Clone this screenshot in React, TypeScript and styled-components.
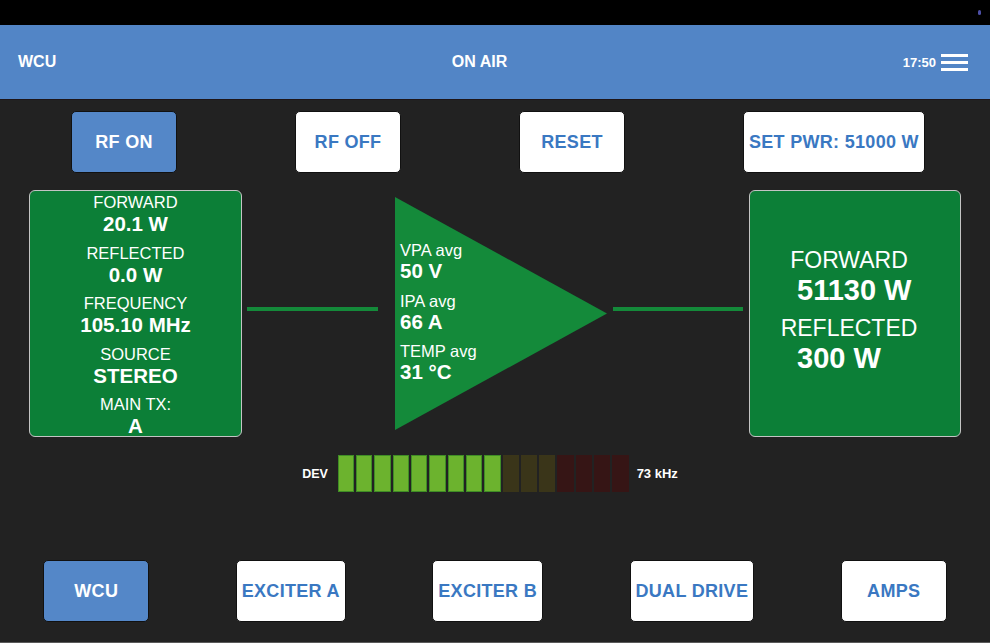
import React from "react";
import styled, { createGlobalStyle } from "styled-components";

const Global = createGlobalStyle`
  html, body { margin: 0; padding: 0; background: #222222; }
  body { font-family: "Liberation Sans", Arial, Helvetica, sans-serif; }
  * { box-sizing: border-box; }
`;

const Page = styled.div`
  width: 990px;
  height: 643px;
  display: flex;
  flex-direction: column;
  background: #222222;
  border-bottom: 1px solid #5a5a5a;
  overflow: hidden;
`;

const StatusBar = styled.div`
  height: 25px;
  background: #000;
  display: flex;
  justify-content: flex-end;
  align-items: center;
  padding-right: 9px;
`;

const StatusDot = styled.span`
  width: 3px;
  height: 5px;
  border-radius: 2px;
  background: #4d4fa6;
`;

const Header = styled.header`
  height: 75px;
  background: #5285c6;
  border-bottom: 1px solid #1e1517;
  display: flex;
  justify-content: space-between;
  align-items: center;
  padding: 0 22px 0 18px;
  color: #fff;
`;

const HeaderTitle = styled.div`
  font-weight: bold;
  font-size: 16px;
`;

const HeaderRight = styled.div`
  display: flex;
  align-items: center;
  gap: 5px;
`;

const Clock = styled.span`
  font-weight: bold;
  font-size: 13px;
`;

const Hamburger = styled.div`
  width: 27px;
  display: flex;
  flex-direction: column;
  gap: 4px;
  span {
    display: block;
    height: 3px;
    background: #fff;
  }
`;

const TopRow = styled.div`
  margin-top: 11px;
  padding-left: 71px;
  display: grid;
  grid-template-columns: repeat(4, 224px);
  justify-items: start;
`;

const Button = styled.button<{ $active?: boolean }>`
  height: 62px;
  min-width: 106px;
  padding: 0 5px;
  border: 1px solid #111;
  border-radius: 5px;
  background: ${(p) => (p.$active ? "#5487c8" : "#ffffff")};
  color: ${(p) => (p.$active ? "#ffffff" : "#3a78c2")};
  font-family: "Liberation Sans", Arial, Helvetica, sans-serif;
  font-weight: bold;
  font-size: 18px;
  letter-spacing: 0.3px;
  white-space: nowrap;
  cursor: pointer;
`;

const Middle = styled.div`
  margin-top: 17px;
  padding-left: 29px;
  height: 247px;
  display: flex;
  align-items: center;
`;

const Panel = styled.div`
  height: 247px;
  background: #0c7f37;
  border: 1px solid #c4c4c4;
  border-radius: 6px;
  color: #fff;
  display: flex;
  flex-direction: column;
`;

const LeftPanel = styled(Panel)`
  width: 213px;
  align-items: center;
  padding-top: 1px;
  gap: 7.5px;
`;

const InfoGroup = styled.div`
  display: flex;
  flex-direction: column;
  align-items: center;
`;

const SmallLabel = styled.div`
  font-size: 16.5px;
  line-height: 20px;
`;

const SmallValue = styled.div<{ $lh?: number }>`
  font-size: 20.5px;
  font-weight: bold;
  line-height: ${(p) => p.$lh ?? 23}px;
`;

const Wire = styled.div<{ $width: number; $gap: number }>`
  width: ${(p) => p.$width}px;
  margin-left: ${(p) => p.$gap}px;
  height: 4px;
  margin-bottom: 9px;
  background: #148a3a;
`;

const Amp = styled.div`
  position: relative;
  margin-left: 17px;
  width: 212px;
  height: 233px;
  color: #fff;
  padding: 43px 0 0 5px;
  display: flex;
  flex-direction: column;
  gap: 9.5px;
`;

const AmpShape = styled.svg`
  position: absolute;
  left: 0;
  top: 0;
  z-index: 0;
`;

const AmpGroup = styled.div`
  position: relative;
  z-index: 1;
`;

const RightPanel = styled(Panel)`
  width: 212px;
  margin-left: 6px;
  justify-content: center;
  padding: 0 12px 5px 0;
  gap: 8px;
`;

const BigGroup = styled.div`
  display: flex;
  flex-direction: column;
`;

const BigLabel = styled.div`
  align-self: center;
  font-size: 23px;
  line-height: 26px;
`;

const BigValue = styled.div`
  padding-left: 47px;
  font-size: 29px;
  font-weight: bold;
  line-height: 34px;
`;

const Meter = styled.div`
  margin-top: 18px;
  height: 37px;
  display: flex;
  justify-content: center;
  align-items: center;
  padding-right: 10px;
  color: #fff;
  font-weight: bold;
`;

const MeterLabel = styled.span<{ $size: number }>`
  font-size: ${(p) => p.$size}px;
`;

const Bars = styled.div`
  display: flex;
  gap: 2px;
  height: 37px;
  margin: 0 8px 0 10px;
`;

const barColors: Record<string, [string, string]> = {
  green: ["#6cb32e", "#3f8d25"],
  olive: ["#3a3519", "#3a3519"],
  red: ["#361515", "#361515"],
};

const Bar = styled.div<{ $kind: string }>`
  width: 16.3px;
  height: 37px;
  background: ${(p) => barColors[p.$kind][0]};
  border: 1px solid ${(p) => barColors[p.$kind][1]};
`;

const BottomRow = styled.div`
  margin-top: auto;
  padding-bottom: 20px;
  display: flex;
  justify-content: space-around;
`;

const leftInfo = [
  ["FORWARD", "20.1 W"],
  ["REFLECTED", "0.0 W"],
  ["FREQUENCY", "105.10 MHz"],
  ["SOURCE", "STEREO"],
  ["MAIN TX:", "A"],
];

const ampInfo = [
  ["VPA avg", "50 V"],
  ["IPA avg", "66 A"],
  ["TEMP avg", "31 °C"],
];

const bars = [
  ...Array(9).fill("green"),
  ...Array(3).fill("olive"),
  ...Array(4).fill("red"),
];

export default function App() {
  return (
    <>
      <Global />
      <Page>
        <StatusBar>
          <StatusDot />
        </StatusBar>
        <Header>
          <HeaderTitle>WCU</HeaderTitle>
          <HeaderTitle>ON AIR</HeaderTitle>
          <HeaderRight>
            <Clock>17:50</Clock>
            <Hamburger>
              <span />
              <span />
              <span />
            </Hamburger>
          </HeaderRight>
        </Header>

        <TopRow>
          <Button $active>RF ON</Button>
          <Button>RF OFF</Button>
          <Button>RESET</Button>
          <Button>SET PWR: 51000 W</Button>
        </TopRow>

        <Middle>
          <LeftPanel>
            {leftInfo.map(([l, v]) => (
              <InfoGroup key={l}>
                <SmallLabel>{l}</SmallLabel>
                <SmallValue>{v}</SmallValue>
              </InfoGroup>
            ))}
          </LeftPanel>
          <Wire $width={131} $gap={5} />
          <Amp>
            <AmpShape width="212" height="233" viewBox="0 0 212 233">
              <polygon points="0,0 212,116.5 0,233" fill="#148a3a" />
            </AmpShape>
            {ampInfo.map(([l, v]) => (
              <AmpGroup key={l}>
                <SmallLabel>{l}</SmallLabel>
                <SmallValue $lh={21}>{v}</SmallValue>
              </AmpGroup>
            ))}
          </Amp>
          <Wire $width={130} $gap={6} />
          <RightPanel>
            <BigGroup>
              <BigLabel>FORWARD</BigLabel>
              <BigValue>51130 W</BigValue>
            </BigGroup>
            <BigGroup>
              <BigLabel>REFLECTED</BigLabel>
              <BigValue>300 W</BigValue>
            </BigGroup>
          </RightPanel>
        </Middle>

        <Meter>
          <MeterLabel $size={12.5}>DEV</MeterLabel>
          <Bars>
            {bars.map((k, i) => (
              <Bar key={i} $kind={k} />
            ))}
          </Bars>
          <MeterLabel $size={13}>73 kHz</MeterLabel>
        </Meter>

        <BottomRow>
          <Button $active>WCU</Button>
          <Button>EXCITER A</Button>
          <Button>EXCITER B</Button>
          <Button>DUAL DRIVE</Button>
          <Button>AMPS</Button>
        </BottomRow>
      </Page>
    </>
  );
}
